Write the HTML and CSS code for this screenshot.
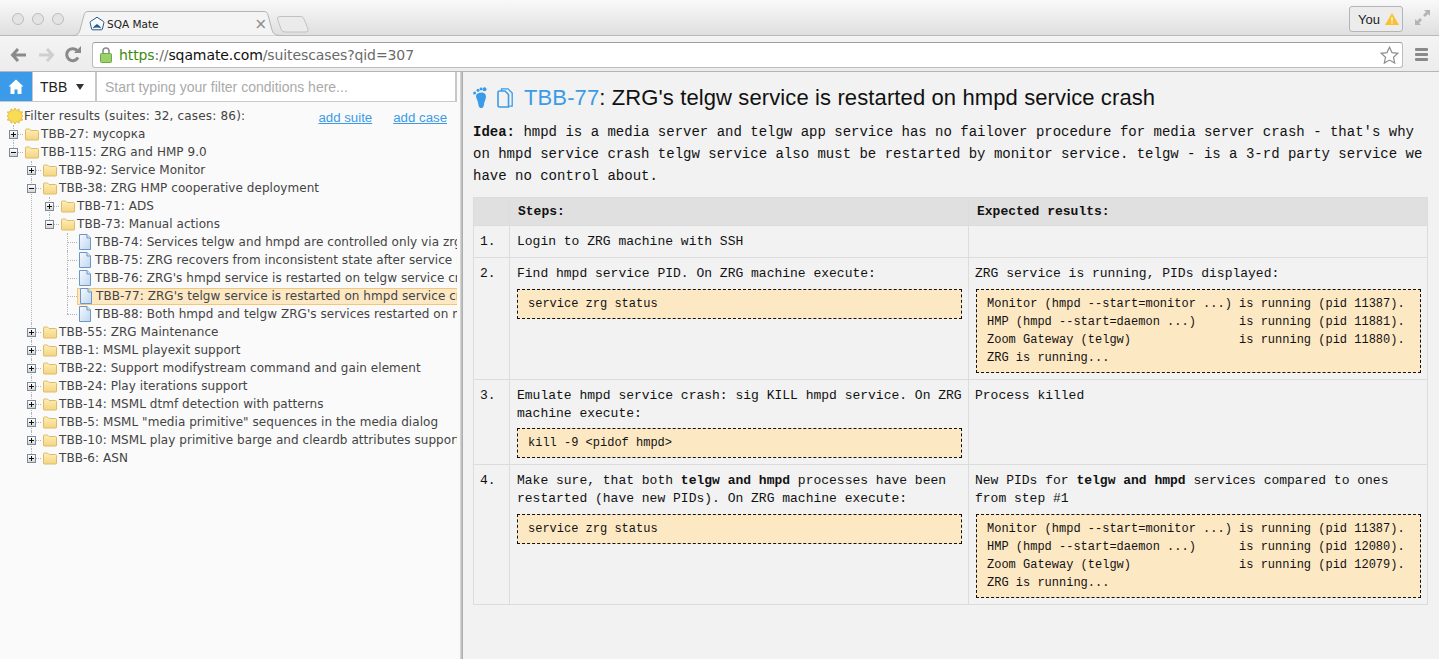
FILE: index.html
```html
<!DOCTYPE html>
<html lang="en">
<head>
<meta charset="utf-8">
<title>SQA Mate</title>
<link rel="stylesheet" href="styles.css">
</head>
<body>
<svg class="defs" width="0" height="0" aria-hidden="true">
  <defs>
    <linearGradient id="fold" x1="0" y1="0" x2="0" y2="1"><stop offset="0" stop-color="#fdeeb8"/><stop offset="1" stop-color="#f5d47e"/></linearGradient>
    <linearGradient id="page" x1="0" y1="0" x2="1" y2="1"><stop offset="0" stop-color="#f7fafe"/><stop offset="1" stop-color="#bed5ef"/></linearGradient>
    <symbol id="folder" viewBox="0 0 16 16"><path d="M1.500 13.500V4q0-1 1-1h3l1.500 1.500h6.500q1 0 1 1v8q0 .5-.5.5H2q-.5 0-.5-.5z" fill="url(#fold)" stroke="#dcbc6c"/></symbol>
    <symbol id="doc" viewBox="0 0 12 16"><path d="M.5.5h7.500l3.500 3.500v11.500H.5z" fill="url(#page)" stroke="#6a96c8"/><path d="M8 .5V4h3.500" fill="#dce9f7" stroke="#6a96c8"/></symbol>
  </defs>
</svg>
<header class="browser">
  <div class="tabstrip">
    <div class="lights"><i class="light"></i><i class="light"></i><i class="light"></i></div>
    <div class="tab">
      <svg class="tab-shape" width="208" height="25" viewBox="0 0 208 25"><path d="M0 24.500C5 24.500 6 22 7 19L11 4C12 1 13 .5 16 .5H190C193 .5 194 1 195 4L199 19C200 22 201 24.500 208 24.500" fill="#f4f4f4" stroke="#b4b4b4"/></svg>
      <svg class="favicon" width="16" height="16" viewBox="0 0 16 16"><path d="M8 1.200l6.500 4.300q.6.400.4 1.200L13.400 13q-.2.800-1 .8H3.600q-.8 0-1-.8L1.100 6.700q-.2-.8.4-1.200z" fill="#f7fbff" stroke="#2b5a86"/><path d="M3.500 12.500Q5 9.500 8 8q3 1.500 4.500 4.500Q8 10.500 3.500 12.500z" fill="#2b5a86"/></svg>
      <span class="tab-title">SQA Mate</span>
      <span class="tab-close">×</span>
    </div>
    <svg class="newtab" width="32" height="17" viewBox="0 0 32 17"><path d="M3 .5H24Q26 .5 27 3L31 13Q32 16 29 16H8Q5 16 4 13L.5 3Q0 .5 3 .5z" fill="#ebebeb" stroke="#c2c2c2"/></svg>
    <div class="spacer"></div>
    <div class="you">You
      <svg width="14" height="12" viewBox="0 0 14 12"><path d="M7 0l7 12H0z" fill="#f8c12f"/><path d="M6.400 4h1.200v4.500H6.400zM6.400 9.300h1.200v1.200H6.400z" fill="#fff"/></svg>
    </div>
    <svg class="expand" width="15" height="15" viewBox="0 0 15 15"><path d="M9 0h6v6l-2-2-3 3-2-2 3-3zM0 15V9l2 2 3-3 2 2-3 3 2 2z" fill="#b4b4b4"/></svg>
  </div>
  <div class="toolbar">
    <svg class="nav" width="18" height="16" viewBox="0 0 18 16"><path d="M8 2L2.500 8 8 14M3 8h13" fill="none" stroke="#8a8a8a" stroke-width="3"/></svg>
    <svg class="nav" width="18" height="16" viewBox="0 0 18 16"><path d="M10 2l5.500 6L10 14M15 8H2" fill="none" stroke="#cfcfcf" stroke-width="3"/></svg>
    <svg class="nav" width="18" height="18" viewBox="0 0 18 18"><path d="M14 11.500A6 6 0 1 1 13.500 5" fill="none" stroke="#8a8a8a" stroke-width="3"/><path d="M10 7h7V0z" fill="#8a8a8a"/></svg>
    <div class="omnibox">
      <svg class="lock" width="12" height="16" viewBox="0 0 12 16"><path d="M3 7V4a3 3 0 0 1 6 0v3" fill="none" stroke="#8c8c8c" stroke-width="1.600"/><rect x=".5" y="6.500" width="11" height="9" rx="1" fill="#9bd16a" stroke="#6fa845"/></svg>
      <span class="url"><span class="scheme">https</span><span class="dim">://</span><span class="host">sqamate.com</span><span class="dim">/suitescases?qid=307</span></span>
      <svg class="star" width="19" height="18" viewBox="0 0 19 18"><path d="M9.500 1.200l2.500 5.400 5.900.7-4.400 4 1.200 5.800-5.200-3-5.200 3 1.200-5.800-4.400-4 5.900-.7z" fill="#fff" stroke="#8d8d8d" stroke-width="1.200"/></svg>
    </div>
    <div class="menu"><i></i><i></i><i></i></div>
  </div>
</header>
<div class="app">
  <aside class="side">
    <div class="filterbar">
      <a class="home"><svg width="16" height="15" viewBox="0 0 16 15"><path d="M8 .5L.5 7.500h2V15h4v-4.500h3V15h4V7.500h2z" fill="#fff"/></svg></a>
      <div class="project"><span>TBB</span><span class="caret"></span></div>
      <div class="filter">Start typing your filter conditions here...</div>
    </div>
    <div class="results">
      <svg width="16" height="16" viewBox="0 0 16 16"><path d="M8 0l1.500 2.700L12 .9l.5 3 3-.1-1 2.600L16 8l-1.500 1.600 1 2.600-3 .1-.5 2.800-2.500-1.700L8 16l-1.500-2.600L4 15.100l-.5-2.800-3-.1 1-2.600L0 8l1.500-1.600-1-2.600 3 .1.500-3 2.500 1.800z" fill="#f8dc55" stroke="#dcab28" stroke-width=".7"/></svg>
      <span class="results-text">Filter results (suites: 32, cases: 86):</span>
      <a class="link add-suite">add suite</a>
      <a class="link add-case">add case</a>
    </div>
    <ul class="tree root">
      <li><div class="row"><i class="exp plus"></i><span class="node"><svg class="ic"><use href="#folder"/></svg><span>TBB-27: мусорка</span></span></div></li>
      <li><div class="row"><i class="exp minus"></i><span class="node"><svg class="ic"><use href="#folder"/></svg><span>TBB-115: ZRG and HMP 9.0</span></span></div>
        <ul class="tree">
          <li><div class="row"><i class="exp plus"></i><span class="node"><svg class="ic"><use href="#folder"/></svg><span>TBB-92: Service Monitor</span></span></div></li>
          <li><div class="row"><i class="exp minus"></i><span class="node"><svg class="ic"><use href="#folder"/></svg><span>TBB-38: ZRG HMP cooperative deployment</span></span></div>
            <ul class="tree">
              <li><div class="row"><i class="exp plus"></i><span class="node"><svg class="ic"><use href="#folder"/></svg><span>TBB-71: ADS</span></span></div></li>
              <li><div class="row"><i class="exp minus"></i><span class="node"><svg class="ic"><use href="#folder"/></svg><span>TBB-73: Manual actions</span></span></div>
                <ul class="tree">
                  <li><div class="row"><i class="exp none"></i><span class="node"><svg class="ic leaf"><use href="#doc"/></svg><span>TBB-74: Services telgw and hmpd are controlled only via zrg service</span></span></div></li>
                  <li><div class="row"><i class="exp none"></i><span class="node"><svg class="ic leaf"><use href="#doc"/></svg><span>TBB-75: ZRG recovers from inconsistent state after service restart</span></span></div></li>
                  <li><div class="row"><i class="exp none"></i><span class="node"><svg class="ic leaf"><use href="#doc"/></svg><span>TBB-76: ZRG's hmpd service is restarted on telgw service crash</span></span></div></li>
                  <li><div class="row"><i class="exp none"></i><span class="node selected"><svg class="ic leaf"><use href="#doc"/></svg><span>TBB-77: ZRG's telgw service is restarted on hmpd service crash</span></span></div></li>
                  <li><div class="row"><i class="exp none"></i><span class="node"><svg class="ic leaf"><use href="#doc"/></svg><span>TBB-88: Both hmpd and telgw ZRG's services restarted on monitor crash</span></span></div></li>
                </ul>
              </li>
            </ul>
          </li>
          <li><div class="row"><i class="exp plus"></i><span class="node"><svg class="ic"><use href="#folder"/></svg><span>TBB-55: ZRG Maintenance</span></span></div></li>
          <li><div class="row"><i class="exp plus"></i><span class="node"><svg class="ic"><use href="#folder"/></svg><span>TBB-1: MSML playexit support</span></span></div></li>
          <li><div class="row"><i class="exp plus"></i><span class="node"><svg class="ic"><use href="#folder"/></svg><span>TBB-22: Support modifystream command and gain element</span></span></div></li>
          <li><div class="row"><i class="exp plus"></i><span class="node"><svg class="ic"><use href="#folder"/></svg><span>TBB-24: Play iterations support</span></span></div></li>
          <li><div class="row"><i class="exp plus"></i><span class="node"><svg class="ic"><use href="#folder"/></svg><span>TBB-14: MSML dtmf detection with patterns</span></span></div></li>
          <li><div class="row"><i class="exp plus"></i><span class="node"><svg class="ic"><use href="#folder"/></svg><span>TBB-5: MSML "media primitive" sequences in the media dialog</span></span></div></li>
          <li><div class="row"><i class="exp plus"></i><span class="node"><svg class="ic"><use href="#folder"/></svg><span>TBB-10: MSML play primitive barge and cleardb attributes support</span></span></div></li>
          <li><div class="row"><i class="exp plus"></i><span class="node"><svg class="ic"><use href="#folder"/></svg><span>TBB-6: ASN</span></span></div></li>
        </ul>
      </li>
    </ul>
  </aside>
  <div class="splitter"></div>
  <main class="content">
    <h1 class="title">
      <svg class="foot" width="14" height="22" viewBox="0 0 14 22"><path d="M3.500 7.500C5.500 5 11 4.500 12.500 7.500 14 11 11.500 13.500 11 17.500 10.700 20.500 9 21.500 7.500 21 5.500 20.500 5.500 18 5 15.500 4.500 12.500 2 10 3.500 7.500z" fill="#3b9be8"/><circle cx="1.600" cy="6" r="1.500" fill="#3b9be8"/><circle cx="5" cy="3.200" r="1.500" fill="#3b9be8"/><circle cx="8" cy="2" r="1.400" fill="#3b9be8"/><circle cx="11.500" cy="2.300" r="2" fill="#3b9be8"/></svg>
      <svg class="copy" width="16" height="20" viewBox="0 0 16 20"><path d="M4.500 3V.8h6.500l4.200 4.200v13.200h-3" fill="none" stroke="#3b9be8" stroke-width="1.300"/><path d="M1 4.500q0-1.500 1.500-1.500h5.500l3.500 3.500v12.500H2.500Q1 19 1 17.500z" fill="#f2f2f2" stroke="#3b9be8" stroke-width="1.600"/></svg>
      <a class="case-id">TBB-77</a><span>: ZRG's telgw service is restarted on hmpd service crash</span>
    </h1>
    <p class="idea"><b>Idea:</b> hmpd is a media server and telgw app service has no failover procedure for media server crash - that's why on hmpd service crash telgw service also must be restarted by monitor service. telgw - is a 3-rd party service we have no control about.</p>
    <table class="steps">
      <colgroup><col class="c1"><col class="c2"><col class="c3"></colgroup>
      <thead><tr><th></th><th>Steps:</th><th>Expected results:</th></tr></thead>
      <tbody>
        <tr><td class="n">1.</td><td>Login to ZRG machine with SSH</td><td></td></tr>
        <tr><td class="n">2.</td>
          <td>Find hmpd service PID. On ZRG machine execute:<pre>service zrg status</pre></td>
          <td>ZRG service is running, PIDs displayed:<pre>Monitor (hmpd --start=monitor ...) is running (pid 11387).
HMP (hmpd --start=daemon ...)      is running (pid 11881).
Zoom Gateway (telgw)               is running (pid 11880).
ZRG is running...</pre></td></tr>
        <tr><td class="n">3.</td>
          <td>Emulate hmpd service crash: sig KILL hmpd service. On ZRG machine execute:<pre>kill -9 &lt;pidof hmpd&gt;</pre></td>
          <td>Process killed</td></tr>
        <tr><td class="n">4.</td>
          <td>Make sure, that both <b>telgw and hmpd</b> processes have been restarted (have new PIDs). On ZRG machine execute:<pre>service zrg status</pre></td>
          <td>New PIDs for <b>telgw and hmpd</b> services compared to ones from step #1<pre>Monitor (hmpd --start=monitor ...) is running (pid 11387).
HMP (hmpd --start=daemon ...)      is running (pid 12080).
Zoom Gateway (telgw)               is running (pid 12079).
ZRG is running...</pre></td></tr>
      </tbody>
    </table>
  </main>
</div>
</body>
</html>
```
FILE: styles.css
```css
* { box-sizing: border-box; }
html, body { margin: 0; height: 100%; overflow: hidden; }
body { display: flex; flex-direction: column; font-family: "DejaVu Sans", sans-serif; background: #f2f2f2; }
.defs { position: absolute; }
.browser { flex: none; height: 72px; display: flex; flex-direction: column; border-bottom: 1px solid #b5b5b5; }
.tabstrip { height: 36px; flex: none; display: flex; align-items: flex-start; background: linear-gradient(#f9f9f9, #dfdfdf); border-bottom: 1px solid #b9b9b9; }
.lights { display: flex; gap: 8px; padding: 13px 0 0 12px; width: 76px; flex: none; }
.light { width: 12px; height: 12px; border-radius: 50%; background: #e4e4e4; border: 1px solid #bdbdbd; }
.tab { position: relative; flex: none; width: 208px; height: 25px; margin: 11px 0 0 -3px; display: flex; align-items: center; padding: 1px 0 0 16px; }
.tab-shape { position: absolute; left: 0; top: 0; }
.favicon, .tab-title, .tab-close { position: relative; }
.favicon { margin-right: 2px; flex: none; }
.tab-title { font-size: 10.500px; color: #222; flex: 1; }
.tab-close { color: #8a8a8a; font-size: 15px; margin-right: 14px; }
.newtab { flex: none; margin: 16px 0 0 -4px; }
.spacer { flex: 1; }
.you { width: 54px; height: 26px; margin-top: 6px; font-size: 13px; color: #222; background: #ececec; border: 1px solid #b5b5b5; border-radius: 3px; display: flex; align-items: center; gap: 5px; padding-left: 8px; font-family: "Liberation Sans", sans-serif; }
.expand { margin: 10px 9px 0 12px; }
.toolbar { flex: 1; display: flex; align-items: center; background: linear-gradient(#f4f4f4, #ececec); padding: 2px 0 0 10px; }
.nav { margin-right: 9px; flex: none; }
.omnibox { width: 1311px; height: 26px; margin-left: 1px; background: #fff; border: 1px solid #bdbdbd; border-top-color: #9d9d9d; border-radius: 3px; display: flex; align-items: center; padding-left: 7px; }
.lock { flex: none; margin-right: 7px; }
.url { flex: 1; font-size: 14px; letter-spacing: -.1px; color: #6f6f6f; font-family: "DejaVu Sans", sans-serif; white-space: nowrap; }
.scheme { color: #3e8a10; }
.host { color: #111; }
.dim { color: #6a6a6a; }
.star { margin-right: 3px; }
.menu { display: flex; flex-direction: column; gap: 2px; margin-left: 12px; }
.menu i { display: block; width: 13px; height: 3px; background: #8a8a8a; border-radius: 1px; }
.app { flex: 1; min-height: 0; display: flex; }
.side { width: 460px; flex: none; background: #fafafa; overflow: hidden; }
.filterbar { display: flex; height: 30px; background: #c8c8c8; padding-bottom: 1px; margin-right: 3px; gap: 1px; }
.home { width: 32px; background: #3b9be8; display: flex; align-items: center; justify-content: center; }
.project { width: 62px; background: #fff; display: flex; align-items: center; justify-content: space-between; padding: 0 11px 0 7px; font: 14px "Liberation Sans", sans-serif; color: #222; }
.caret { width: 0; height: 0; border: 4px solid transparent; border-top: 6px solid #333; border-bottom: 0; }
.filter { flex: 1; background: #fff; display: flex; align-items: center; padding-left: 8px; font: 14px "Liberation Sans", sans-serif; color: #aaa; border-left: 1px solid #c8c8c8; border-right: 2px solid #c8c8c8; }
.results { height: 23px; display: flex; align-items: center; padding: 5px 0 0 7px; font-size: 12px; letter-spacing: .18px; color: #444; }
.results svg { flex: none; margin-right: 1px; }
.results-text { flex: 1; }
.link { color: #3b9be8; text-decoration: underline; font: 13.250px "Liberation Sans", sans-serif; letter-spacing: 0; padding-top: 2px; }
.add-suite { margin-right: 21px; }
.add-case { margin-right: 13px; }
.tree { list-style: none; margin: 0; padding: 0 0 0 18px; }
.tree.root { padding-left: 4px; width: 457px; overflow: hidden; }
.tree li { position: relative; }
.tree li::before { content: ""; position: absolute; left: 9px; top: 0; bottom: 0; border-left: 1px dotted #b5b5b5; }
.tree li:last-child::before { bottom: auto; height: 9px; }
.tree li::after { content: ""; position: absolute; left: 9px; top: 9px; width: 10px; border-top: 1px dotted #b5b5b5; }
.row { position: relative; z-index: 1; height: 18px; display: flex; align-items: center; padding-left: 5px; white-space: nowrap; font-size: 12px; letter-spacing: .055px; color: #444; }
.exp { flex: none; width: 9px; height: 9px; border: 1px solid #7d8a98; background: linear-gradient(#fff, #d5d5d5); position: relative; }
.exp.none { visibility: hidden; }
.exp::before { content: ""; position: absolute; left: 1px; right: 1px; top: 3px; height: 1px; background: #111; }
.plus::after { content: ""; position: absolute; top: 1px; bottom: 1px; left: 3px; width: 1px; background: #111; }
.node { flex: 1; min-width: 0; margin-left: 5px; padding-left: 1px; height: 17px; display: flex; align-items: center; gap: 1px; }
.ic { flex: none; width: 16px; height: 16px; }
.ic.leaf { width: 12px; margin: 0 3px 0 1px; }
.selected { background: #fde8c4; border: 1px solid #f5c67a; border-right: 0; }
.splitter { width: 3px; flex: none; background: linear-gradient(90deg, #dcdcdc, #a5a5a5); }
.content { flex: 1; min-width: 0; padding: 0 12px 0 10px; background: #f2f2f2; }
.title { display: flex; align-items: center; height: 49px; margin: 0; padding-top: 3px; font: 400 22px "Liberation Sans", sans-serif; letter-spacing: .115px; color: #111; }
.foot { margin-right: 10px; flex: none; }
.copy { margin-right: 11px; flex: none; }
.case-id { color: #3b9be8; }
.idea { margin: 0; font: 14px/22px "Liberation Mono", monospace; color: #111; }
.steps { margin-top: 10px; width: 954px; table-layout: fixed; border-collapse: collapse; font: 13px/18.200px "Liberation Mono", monospace; color: #111; }
.c1 { width: 36px; }
.c2, .c3 { width: 459px; }
.steps th, .steps td { border: 1px solid #dcdcdc; text-align: left; vertical-align: top; }
.steps th { background: #e0e0e0; height: 28px; padding: 5px 8px 0; font-weight: 700; }
.steps td { padding: 7px 6px 6px 7px; }
.steps td:last-child { padding-left: 6px; }
.steps td:last-child pre { margin-left: 1px; }
.steps td.n { padding-left: 6px; }
.steps pre { margin: 5.200px 0 0; padding: 5px 10px; border: 1px dashed #111; background: #fde8c4; font: 12px/18px "Liberation Mono", monospace; }
```
